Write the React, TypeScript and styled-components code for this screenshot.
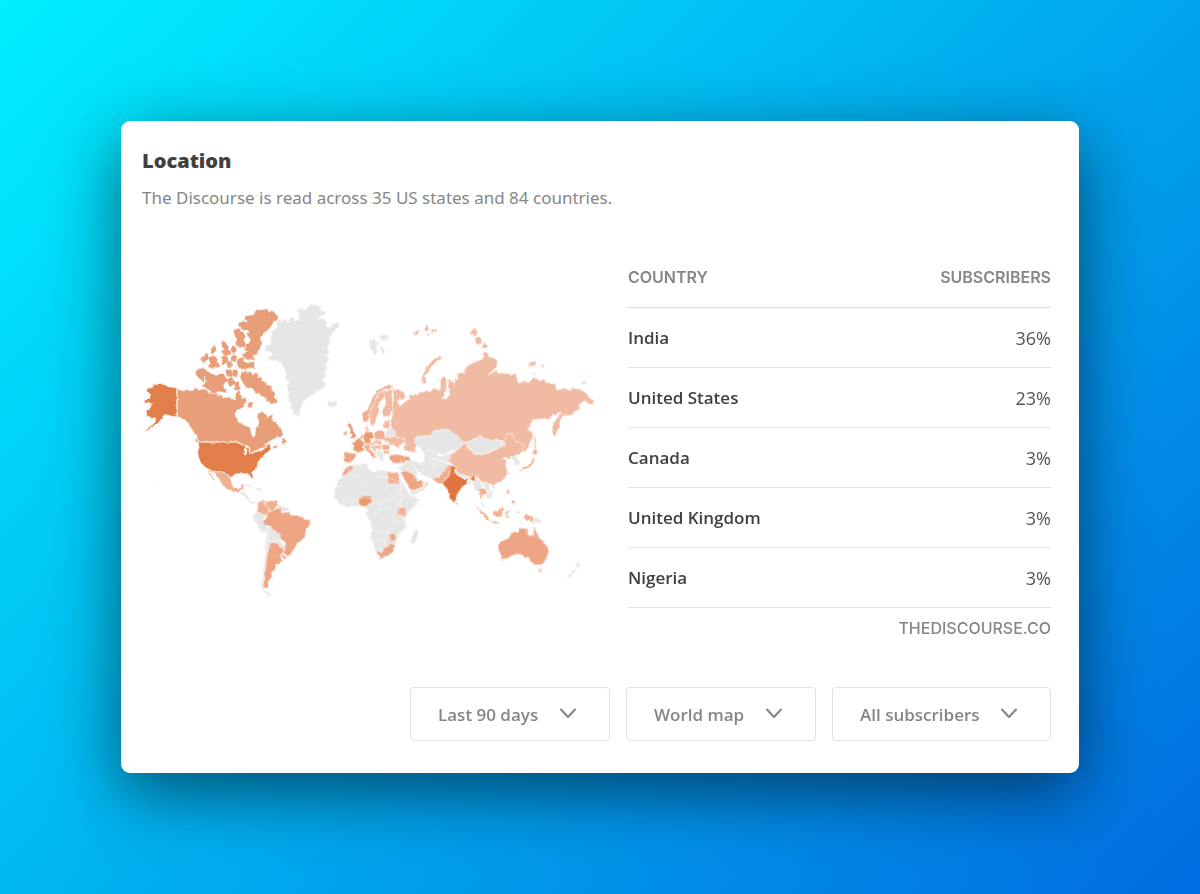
import React from "react";
import styled, { createGlobalStyle } from "styled-components";

const GlobalStyle = createGlobalStyle`
  *, *::before, *::after { box-sizing: border-box; }
  body {
    margin: 0;
    font-family: "Open Sans", "Noto Sans", sans-serif;
    color: #404040;
  }
`;

const Page = styled.main`
  display: flex;
  align-items: center;
  justify-content: center;
  min-height: 100vh;
  padding: 121px;
  background: linear-gradient(135deg, #00f0ff 0%, #006ce0 100%);
`;

const Card = styled.section`
  flex: 1;
  min-width: 0;
  padding: 26px 28px 32px 21px;
  border-radius: 9px;
  background: #fff;
  box-shadow: 0 20px 68px rgba(0, 0, 0, 0.55);
`;

const Title = styled.h1`
  margin: 0;
  font-size: 20px;
  font-weight: 800;
  line-height: 28px;
`;

const Summary = styled.p`
  margin: 9px 0 0;
  font-family: "Noto Sans", sans-serif;
  font-size: 17px;
  line-height: 28px;
  color: #868686;
`;

const Content = styled.div`
  display: grid;
  grid-template-columns: minmax(0, 456fr) minmax(0, 423fr);
  gap: 30px;
  align-items: center;
  margin-top: 35px;
`;

const Map = styled.svg`
  display: block;
  width: 100%;
  height: auto;
`;

const Table = styled.table`
  width: 100%;
  border-collapse: separate;
  border-spacing: 0;
`;

const HeadCell = styled.th<{ $end?: boolean }>`
  height: 61px;
  padding: 0;
  border-bottom: 1px solid #dcdcdc;
  font-family: Inter, sans-serif;
  font-size: 16px;
  font-weight: 600;
  text-align: ${(p) => (p.$end ? "right" : "left")};
  text-transform: uppercase;
  color: #868686;
`;

const NameCell = styled.th`
  height: 60px;
  padding: 0;
  border-bottom: 1px solid #e2e2e2;
  font-size: 17px;
  font-weight: 600;
  text-align: left;
`;

const ValueCell = styled.td`
  height: 60px;
  padding: 0;
  border-bottom: 1px solid #e2e2e2;
  font-size: 18px;
  text-align: right;
  color: #555;
`;

const Source = styled.p`
  margin: 8px 0 13px;
  font-family: Inter, sans-serif;
  font-size: 16px;
  font-weight: 500;
  line-height: 24px;
  text-align: right;
  text-transform: uppercase;
  color: #868686;
`;

const Filters = styled.div`
  display: flex;
  flex-wrap: wrap;
  justify-content: flex-end;
  gap: 16px;
  margin-top: 34px;
`;

const FilterBox = styled.label`
  display: inline-grid;
  align-items: center;

  > * { grid-area: 1 / 1; }
`;

const Select = styled.select`
  appearance: none;
  height: 54px;
  padding: 0 70px 0 27px;
  border: 1px solid #e2e2e2;
  border-radius: 4px;
  background: #fff;
  font-family: inherit;
  font-size: 17px;
  font-weight: 600;
  color: #868686;
`;

const Chevron = styled.svg`
  justify-self: end;
  width: 18px;
  height: 12px;
  margin-right: 33px;
  pointer-events: none;
`;

const shade = {
  india: "#e07540",
  us: "#e27e49",
  canada: "#e89e78",
  strong: "#ea9a70",
  mid: "#eda583",
  soft: "#efaf90",
  light: "#f1bba3",
  none: "#e6e6e6",
};

type Shape = [keyof typeof shade, string];

interface Region {
  x: number;
  y: number;
  islands?: boolean;
  shapes: Shape[];
}

const regions: Region[] = [
  {
    // Arctic islands of Canada
    x: -9,
    y: -15,
    islands: true,
    shapes: [
      ["canada", "375,48 395,44 402,52 412,50 427,66 412,84 400,100 384,112 372,130 378,146 372,160 364,176 345,180 358,192 330,188 325,178 345,168 330,160 334,150 345,146 350,132 338,118 345,106 328,104 316,96 312,86 330,82 334,96 340,80 332,66 355,62 365,50"],
      ["canada", "298,108 310,102 322,112 330,126 324,136 330,148 318,156 306,150 304,142 310,134 302,122"],
      ["canada", "310,194 324,190 328,204 355,204 356,216 315,218 308,206"],
      ["canada", "294,154 302,160 298,174 290,166"],
      ["canada", "292,184 304,182 300,198 290,194"],
      ["canada", "262,140 270,144 280,160 272,164 264,154"],
      ["canada", "230,160 242,154 240,166 232,174"],
      ["canada", "262,168 280,166 286,176 268,180"],
      ["canada", "198,192 216,178 220,186 206,200"],
      ["canada", "222,192 236,184 246,194 242,202 254,212 236,218 222,214 230,206"],
      ["canada", "262,186 276,186 276,200 264,206"],
      ["canada", "278,202 288,200 288,214 280,216"],
      ["canada", "188,224 208,222 214,234 204,244 206,256 194,248 186,240"],
      ["canada", "212,240 222,232 232,240 246,246 252,238 264,238 274,256 264,266 264,278 272,290 248,286 238,294 222,282 206,272 214,262 222,264 212,250"],
      ["canada", "274,228 288,226 290,240 278,242"],
      ["canada", "296,226 306,228 304,244 294,240"],
      ["canada", "282,252 292,248 296,264 286,272 280,262"],
      ["canada", "298,264 312,262 314,282 302,284"],
      ["canada", "320,238 332,230 336,244 344,232 354,240 366,236 366,250 378,250 376,260 392,262 390,270 408,276 406,286 418,300 412,306 425,320 408,324 404,314 396,318 398,306 384,304 374,290 366,294 356,280 346,274 338,278 326,262 320,252"],
    ],
  },
  {
    // North America
    x: -9,
    y: 225,
    shapes: [
      ["us", "125,40 112,36 100,36 92,30 75,25 66,30 58,28 52,38 38,40 32,48 40,52 48,60 42,66 45,68 27,78 30,84 50,86 46,98 34,108 36,124 50,130 62,128 62,138 50,150 25,172 48,158 64,146 80,134 84,122 92,120 108,122 125,126"],
      ["canada", "127,40 136,46 148,48 154,42 160,46 172,48 182,38 192,46 200,42 215,44 222,54 228,50 236,58 245,54 250,66 254,58 268,68 285,66 290,76 300,72 302,56 312,44 318,58 322,72 330,66 336,80 326,90 328,96 306,106 302,124 310,140 326,150 345,158 352,186 360,184 362,164 370,150 372,140 366,124 372,110 384,110 392,116 398,126 412,118 412,130 420,142 430,150 438,160 444,176 440,186 420,190 402,200 386,212 404,206 408,212 396,214 380,222 362,226 345,240 345,222 338,212 320,206 306,200 192,200 186,184 176,172 170,162 160,146 148,132 127,124"],
      ["canada", "340,82 352,80 356,92 346,98 338,92"],
      ["canada", "412,214 424,210 428,216 416,222"],
      ["canada", "440,200 448,188 456,206 444,208"],
      ["canada", "182,188 190,200 190,206 180,196"],
      ["us", "192,202 306,202 316,208 334,214 328,222 327,238 334,238 336,220 342,222 343,236 352,236 364,230 382,226 398,212 404,210 408,222 398,232 388,238 384,246 376,252 368,262 366,278 350,292 355,310 349,310 342,296 330,296 318,296 300,296 286,308 278,296 264,290 250,290 234,288 212,278 198,264 190,244 188,222"],
      ["soft", "236,291 250,292 264,292 278,299 286,310 290,326 296,338 308,342 318,338 320,331 329,330 326,341 316,345 312,352 300,350 280,344 264,332 256,318 246,306"],
      ["soft", "216,284 222,286 230,302 240,316 236,316 224,300"],
      ["none", "312,353 326,350 330,356 338,360 342,374 350,380 364,382 364,385 350,385 336,374 328,362"],
      ["none", "325,331 340,328 354,338 344,336"],
      ["none", "362,340 376,340 380,346 366,346"],
      ["none", "68,332 73,336 69,338"],
    ],
  },
  {
    // Greenland and Iceland
    x: 351,
    y: -6,
    shapes: [
      ["none", "50,100 66,88 66,72 76,62 80,72 92,60 98,74 106,60 116,58 122,70 132,64 134,46 124,42 138,32 154,34 160,22 178,20 200,28 190,34 208,40 216,50 196,54 190,64 204,62 216,72 214,84 222,92 232,78 250,74 254,84 240,96 228,108 222,118 226,134 216,146 222,160 216,174 222,186 212,198 218,214 206,222 214,236 200,244 212,254 206,270 186,280 172,290 160,300 144,310 140,326 134,344 134,356 118,348 108,330 106,310 98,296 104,284 96,270 102,254 92,244 94,228 86,206 78,192 62,186 42,186 36,178 52,172 48,162 28,158 30,146 50,136 46,122 52,112"],
      ["none", "216,312 226,308 230,312 244,308 248,318 236,328 222,326"],
    ],
  },
  {
    // South America
    x: 276,
    y: 540,
    shapes: [
      ["none", "110,162 118,186 108,230 104,272 98,320 110,336 122,346 106,342 94,322 98,292 104,232"],
      ["none", "70,104 80,96 92,96 108,106 98,120 102,132 112,142 110,162 92,152 78,128 68,116"],
      ["none", "112,142 122,140 132,150 148,160 152,176 148,182 134,184 122,188 114,170"],
      ["none", "138,186 150,180 156,192 168,196 166,208 152,204"],
      ["none", "146,74 158,80 176,82 180,92 166,94 154,94 146,86"],
      ["soft", "90,62 104,58 102,72 116,80 112,98 106,106 80,94 84,84 82,74"],
      ["soft", "104,58 108,66 118,62 142,64 146,76 136,84 130,94 118,90 114,78 104,72"],
      ["mid", "112,92 130,94 140,86 150,84 156,98 178,96 182,106 200,106 216,112 238,120 242,130 228,150 224,176 204,188 192,206 176,230 158,218 168,206 168,188 152,176 148,160 132,150 118,138 102,134 98,124 110,112"],
      ["soft", "156,221 172,232 164,238 154,232"],
      ["mid", "120,188 138,188 152,202 164,206 152,222 152,234 158,244 138,254 136,268 124,276 126,290 114,306 116,318 108,326 100,320 102,298 106,270 110,230"],
      ["soft", "112,336 122,346 116,346"],
      ["none", "146,326 154,324 152,328"],
    ],
  },
  {
    // Russia, Europe and central Asia
    x: 546,
    y: 60,
    shapes: [
      ["light", "218,208 235,208 250,218 258,232 250,240 236,236 232,246 240,258 250,250 262,240 270,236 268,222 278,226 292,224 300,218 312,216 322,210 328,216 345,206 360,210 362,180 370,166 378,176 380,200 374,226 366,238 378,238 390,222 384,200 388,178 396,184 406,192 402,176 414,180 412,160 430,160 440,140 460,128 480,120 492,112 488,98 500,96 510,112 524,114 532,124 530,140 505,166 530,150 534,160 545,162 560,160 575,165 585,158 592,176 596,190 610,184 625,188 635,180 640,170 655,180 670,180 680,188 705,192 712,210 730,206 752,212 755,204 780,208 800,220 808,236 822,240 818,252 805,252 796,240 782,250 775,256 782,266 765,274 755,286 738,286 726,288 720,302 718,320 705,348 697,340 698,312 712,294 724,276 715,278 706,288 700,280 690,296 672,296 640,298 622,330 634,330 638,345 632,360 626,380 614,396 606,392 614,374 586,364 576,340 562,340 554,364 530,360 510,360 490,354 480,348 464,356 440,366 430,366 420,358 402,342 390,332 372,326 345,334 335,346 290,350 284,362 290,376 286,388 288,398 270,396 254,390 250,380 258,372 250,366 255,358 240,354 226,348 214,322 212,300 218,288 216,260 222,240"],
      ["light", "362,108 367,114 350,124 340,134 328,150 316,166 318,190 306,190 303,178 312,160 318,142 338,120"],
      ["light", "278,36 292,32 298,40 286,46"],
      ["light", "312,28 322,14 328,28 318,34"],
      ["light", "332,30 350,26 348,34 336,38"],
      ["light", "314,40 330,42 322,48"],
      ["light", "452,40 464,22 474,36 468,48 458,48"],
      ["light", "464,54 478,48 486,66 472,76"],
      ["light", "484,86 492,66 504,80 494,84"],
      ["light", "624,132 635,124 650,128 644,138 626,140"],
      ["light", "660,134 674,138 668,142"],
      ["light", "638,156 648,160 642,162"],
      ["light", "782,190 794,184 796,190"],
      ["light", "644,340 648,356 647,376 650,390 643,382"],
      ["none", "148,58 156,64 160,50 168,66 178,70 166,78 172,94 164,108 158,96 150,80"],
      ["none", "176,48 200,44 207,52 188,62 180,56"],
      ["none", "182,76 188,84 196,94 190,102 182,90"],
      ["none", "284,360 290,350 335,348 337,338 372,326 392,334 404,342 420,356 432,368 422,378 410,390 392,392 380,400 370,404 345,398 330,390 318,392 320,402 310,398 300,384 288,376"],
      ["none", "316,394 330,391 348,400 358,410 374,406 386,400 408,394 414,404 396,410 396,420 384,430 370,424 352,420 336,416 322,414 312,404"],
      ["soft", "126,280 140,270 150,255 158,232 172,212 195,198 212,194 218,204 206,206 190,208 174,220 162,244 152,268 148,296 140,306 128,302"],
      ["light", "152,270 162,246 176,220 190,212 197,228 184,240 174,260 178,274 168,296 166,310 158,320 152,312 148,294"],
      ["light", "190,210 204,214 208,204 216,212 216,236 219,268 206,288 190,290 186,272 198,252 194,230"],
      ["light", "192,304 206,300 210,310 208,322 190,324 186,314 196,312"],
      ["none", "198,334 212,320 226,336 222,348 198,348"],
      ["light", "196,352 224,350 246,357 256,366 240,374 236,384 222,376 212,376 204,364 192,362"],
      ["soft", "162,338 176,332 192,334 196,352 186,362 164,356"],
      ["strong", "134,340 144,334 158,337 160,354 150,358 154,370 134,370 130,350"],
      ["strong", "92,368 104,366 108,358 118,354 134,370 130,380 132,392 116,398 102,392 102,376"],
      ["mid", "72,398 84,396 110,402 102,418 92,426 80,427 72,424"],
      ["strong", "82,314 92,306 94,318 104,338 110,348 104,354 88,356 96,346 88,338 92,330"],
      ["soft", "70,340 78,332 82,338 80,346 70,349"],
      ["soft", "120,350 131,342 132,356 120,354"],
      ["soft", "136,322 143,316 143,330 137,330"],
      ["soft", "132,374 148,374 150,386 166,404 168,410 162,416 144,394 134,388"],
      ["light", "134,372 152,371 158,366 166,372 150,378"],
      ["light", "160,360 186,364 184,372 164,370"],
      ["light", "152,380 170,376 186,376 180,388 166,384 172,396 160,392"],
      ["soft", "188,374 206,374 212,388 192,391 184,384"],
      ["light", "190,393 210,392 206,402 190,402"],
      ["none", "174,392 188,394 190,404 200,406 188,410 192,422 180,416 172,402"],
      ["mid", "210,406 230,403 250,407 268,408 272,424 248,428 222,430 208,420"],
      ["none", "152,414 164,416 160,422"],
    ],
  },
  {
    // Africa and the Middle East
    x: 546,
    y: 420,
    shapes: [
      ["none", "94,78 120,72 140,70 146,88 168,96 176,88 200,94 238,98 240,112 250,132 262,152 272,168 298,176 290,194 264,216 254,234 258,262 240,276 236,294 228,304 224,320 212,338 196,352 178,356 168,334 152,296 156,270 150,240 138,222 142,206 130,200 112,196 88,202 66,196 50,184 42,166 44,146 56,118 74,106"],
      ["none", "262,68 276,58 288,66 304,70 314,64 310,48 330,54 350,60 370,66 386,72 384,92 366,100 346,118 330,114 318,110 300,98 284,86 296,104 286,104 258,92 240,92 238,80"],
      ["none", "270,150 290,152 308,142 316,122 328,130 316,148 290,160 274,166"],
      ["mid", "66,106 76,84 94,76 98,86 84,98 72,108"],
      ["soft", "202,96 218,98 232,97 236,104 240,131 202,131"],
      ["mid", "240,96 258,92 282,104 292,120 312,126 306,140 288,150 272,150 258,128 248,110"],
      ["strong", "116,172 130,168 156,168 154,184 140,198 130,200 116,192"],
      ["soft", "236,204 256,202 258,224 252,234 236,220"],
      ["mid", "172,334 186,334 196,322 210,314 220,308 226,322 216,338 196,352 178,356"],
      ["mid", "206,286 218,280 228,288 224,302 212,302"],
      ["none", "290,266 295,274 286,308 276,312 272,302 276,286"],
    ],
  },
  {
    // South and east Asia
    x: 876,
    y: 360,
    shapes: [
      ["none", "104,68 134,58 150,48 162,56 182,60 204,62 222,66 224,76 208,84 188,90 168,102 138,102 118,88"],
      ["light", "62,104 80,92 92,80 104,68 116,88 138,104 170,103 190,92 210,84 226,76 222,64 232,40 246,40 256,64 284,74 276,94 262,104 246,110 236,118 226,110 218,116 232,122 226,132 232,150 230,164 216,182 200,190 188,194 170,188 152,184 144,172 120,170 100,166 82,160 76,140 66,132 54,122 60,116"],
      ["light", "186,202 194,200 192,207"],
      ["none", "76,156 88,162 104,168 118,172 116,178 98,174 80,166"],
      ["soft", "8,178 28,168 44,152 54,134 64,136 60,152 56,166 46,178 40,192 22,190"],
      ["india", "54,142 66,136 76,142 73,152 84,168 104,178 120,176 126,168 140,164 132,185 124,178 112,180 110,192 98,200 82,218 79,238 70,251 58,232 52,208 40,196 38,188 48,178 58,164 60,154"],
      ["none", "112,182 122,182 122,196 112,190"],
      ["none", "128,188 140,172 150,184 154,200 148,206 152,226 144,212 134,208"],
      ["soft", "148,207 158,204 170,214 172,222 160,226 156,222 156,240 150,232"],
      ["none", "156,190 172,190 180,196 178,206 188,220 184,234 172,240 168,228 176,220 166,206"],
      ["none", "152,242 158,246 166,262 160,262"],
      ["soft", "78,246 84,250 80,257"],
      ["none", "240,112 256,106 260,116 268,130 260,138 252,124"],
      ["soft", "274,146 290,138 304,128 308,112 314,118 308,134 294,144 278,150"],
      ["soft", "308,98 316,86 324,98 312,103"],
      ["soft", "268,150 274,148 272,156"],
      ["none", "238,154 242,160 238,166"],
      ["soft", "136,258 150,268 168,284 178,296 174,300 158,288"],
      ["soft", "174,302 198,304 212,312 196,310"],
      ["soft", "188,276 204,272 216,260 222,268 214,290 198,290 190,286"],
      ["soft", "226,276 242,270 232,280 238,292 228,294"],
      ["soft", "230,208 238,212 236,224 230,218"],
      ["soft", "244,242 254,240 254,252 246,250"],
      ["soft", "262,272 268,282 262,280"],
      ["soft", "280,290 290,284 308,290 308,308 300,302 290,298"],
      ["none", "310,291 326,298 336,310 320,306 310,308"],
    ],
  },
  {
    // Oceania
    x: 1026,
    y: 600,
    shapes: [
      ["mid", "163,80 170,96 176,112 190,124 204,144 206,158 198,176 190,192 174,195 160,192 150,180 146,172 136,174 128,164 110,162 94,168 80,176 64,178 62,166 54,148 56,130 72,120 86,114 94,100 104,94 112,98 118,86 130,84 142,88 138,98 150,108 160,104"],
      ["mid", "173,206 180,209 187,206 181,219"],
      ["none", "286,186 294,190 300,198 290,206 290,196"],
      ["none", "284,208 288,212 268,234 258,234 264,226"],
    ],
  },
];

// Inland borders drawn over the larger unshaded areas
const borders = [
  "M624 504 l28 24 l-20 18 m20 -18 l38 30 l32 -26 l-10 -46 m10 46 l28 -2 l40 20 v-70 m0 70 l-2 22 l-26 26 m28 -26 l-2 50",
  "M590 560 h28 l2 40 h30 l26 -10 m-56 10 l-8 22 m34 -22 l-4 22 m16 -28 l44 0 l10 -16 M748 520 v50 h-18 M748 558 h42",
  "M700 614 l30 -6 l30 -12 l36 4 l18 -26 M730 608 l-8 30 l-22 8 M722 626 l36 -4 l6 38 l-6 36 l-54 -6 M766 624 l18 -2 M764 660 l26 2 M758 696 l-18 20 v30 M702 722 h50 M786 600 l-4 22 M784 648 l20 10 l2 20 M812 590 l22 20 M728 716 v44",
  "M806 510 l20 -18 l14 26 l-12 20 M840 484 l14 12 l2 20 M890 474 l-4 30 l16 24 M886 504 l28 -6 l28 4 M868 482 l28 14",
];

const rows = [
  { country: "India", share: "36%" },
  { country: "United States", share: "23%" },
  { country: "Canada", share: "3%" },
  { country: "United Kingdom", share: "3%" },
  { country: "Nigeria", share: "3%" },
];

const filters = [
  { label: "Period", value: "Last 90 days" },
  { label: "Map", value: "World map" },
  { label: "Audience", value: "All subscribers" },
];

function WorldMap() {
  return (
    <Map viewBox="12 0 1368 900" role="img" aria-label="Subscribers by country">
      <defs>
        <filter id="coast" x="0" y="0" width="1380" height="900" filterUnits="userSpaceOnUse" colorInterpolationFilters="sRGB">
          <feTurbulence type="fractalNoise" baseFrequency="0.08" numOctaves={2} seed={4} />
          <feDisplacementMap in="SourceGraphic" scale={9} xChannelSelector="R" yChannelSelector="G" />
        </filter>
      </defs>
      <g filter="url(#coast)" stroke="#fae6dc" strokeWidth={2} strokeLinejoin="round">
        {regions.map((region, i) => (
          <g key={i} transform={`translate(${region.x} ${region.y})`}>
            {region.shapes.map(([tone, points], j) => (
              <polygon
                key={j}
                points={points}
                fill={shade[tone]}
                stroke={region.islands ? shade[tone] : tone === "none" ? "#f4f4f4" : undefined}
                strokeWidth={region.islands ? 5 : undefined}
              />
            ))}
          </g>
        ))}
        {borders.map((d) => (
          <path key={d} d={d} fill="none" stroke="#f8f8f8" />
        ))}
      </g>
    </Map>
  );
}

export default function App() {
  return (
    <>
      <GlobalStyle />
      <Page>
        <Card>
          <Title>Location</Title>
          <Summary>The Discourse is read across 35 US states and 84 countries.</Summary>
          <Content>
            <WorldMap />
            <div>
              <Table>
                <thead>
                  <tr>
                    <HeadCell scope="col">Country</HeadCell>
                    <HeadCell scope="col" $end>Subscribers</HeadCell>
                  </tr>
                </thead>
                <tbody>
                  {rows.map((row) => (
                    <tr key={row.country}>
                      <NameCell scope="row">{row.country}</NameCell>
                      <ValueCell>{row.share}</ValueCell>
                    </tr>
                  ))}
                </tbody>
              </Table>
              <Source>thediscourse.co</Source>
            </div>
          </Content>
          <Filters>
            {filters.map((filter) => (
              <FilterBox key={filter.label}>
                <Select aria-label={filter.label}>
                  <option>{filter.value}</option>
                </Select>
                <Chevron viewBox="0 0 18 12" aria-hidden="true">
                  <path
                    d="M2 1.5 9 9l7-7.5"
                    fill="none"
                    stroke="#868686"
                    strokeWidth="2.1"
                    strokeLinecap="round"
                    strokeLinejoin="round"
                  />
                </Chevron>
              </FilterBox>
            ))}
          </Filters>
        </Card>
      </Page>
    </>
  );
}
